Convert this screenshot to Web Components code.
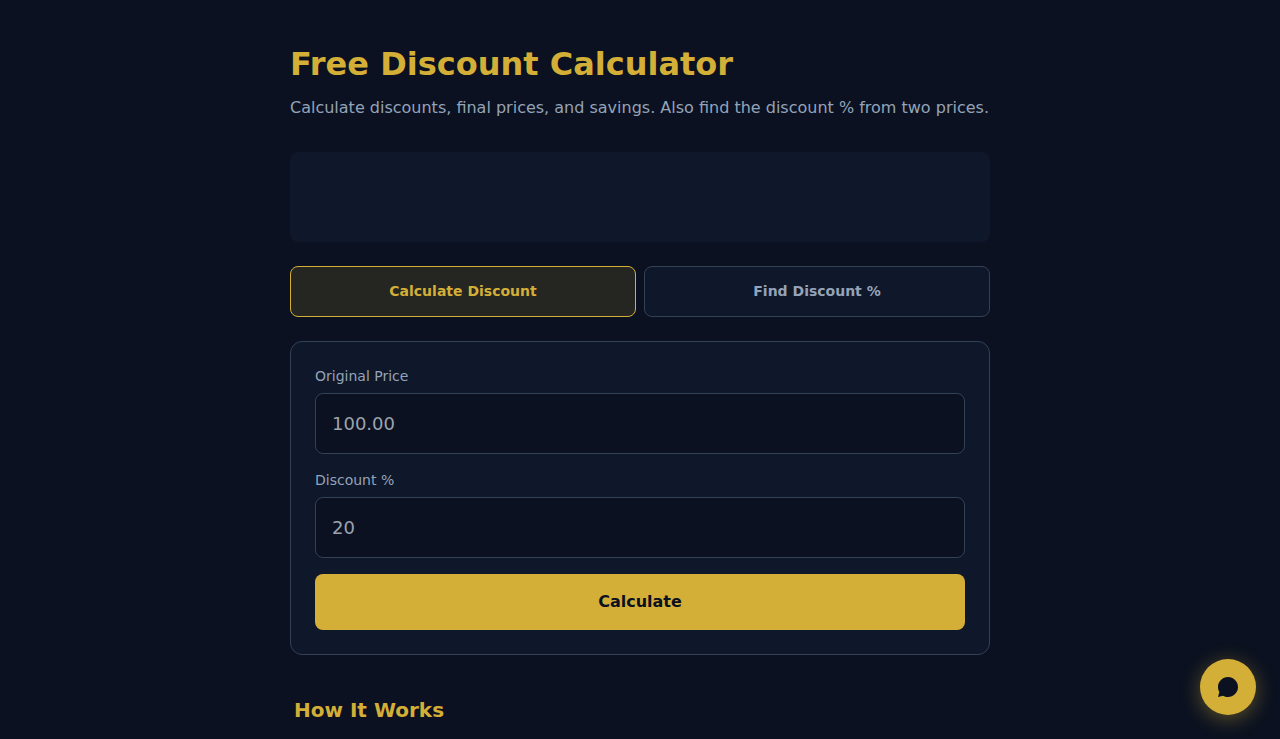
<!DOCTYPE html>
<html lang="en">
<head>
<meta charset="utf-8">
<meta name="viewport" content="width=device-width, initial-scale=1">
<title>Free Discount Calculator</title>
<style>
  :root {
    --bg: #0b1120;
    --surface: #0f172a;
    --line: #334155;
    --muted: #94a3b8;
    --gold: #d4af37;
  }
  body {
    margin: 0;
    background: var(--bg);
    color: var(--muted);
    font: 16px/24px "DejaVu Sans", sans-serif;
  }
</style>
</head>
<body>
<calc-page>
  <page-intro>
    <span slot="title">Free Discount Calculator</span>
    Calculate discounts, final prices, and savings. Also find the discount % from two prices.
  </page-intro>
  <ad-banner></ad-banner>
  <mode-tabs></mode-tabs>
  <discount-form>
    <price-field label="Original Price" placeholder="100.00"></price-field>
    <price-field label="Discount %" placeholder="20"></price-field>
  </discount-form>
  <info-section><span slot="title">How It Works</span></info-section>
</calc-page>
<chat-button></chat-button>

<script>
  const define = (name, html, setup) => {
    const template = document.createElement('template');
    template.innerHTML = html;
    customElements.define(name, class extends HTMLElement {
      constructor() {
        super();
        this.attachShadow({ mode: 'open' }).append(template.content.cloneNode(true));
      }
      connectedCallback() {
        if (setup) setup(this, this.shadowRoot);
      }
    });
  };

  define('calc-page', `
    <style>
      :host { display: block; }
      main {
        box-sizing: border-box;
        max-width: 740px;
        margin: 0 auto;
        padding: 40px 20px 0;
        display: flex;
        flex-direction: column;
        gap: 24px;
      }
    </style>
    <main><slot></slot></main>`);

  define('page-intro', `
    <style>
      :host { display: block; padding-bottom: 8px; }
      h1 { margin: 0 0 8px; font-size: 32px; line-height: 48px; color: var(--gold); }
      p { margin: 0; }
    </style>
    <h1><slot name="title"></slot></h1>
    <p><slot></slot></p>`);

  define('ad-banner', `
    <style>
      :host { display: block; min-height: 90px; border-radius: 8px; background: var(--surface); }
    </style>`);

  define('mode-tabs', `
    <style>
      :host { display: flex; gap: 8px; }
      button {
        flex: 1;
        padding: 16px;
        border: 1px solid var(--line);
        border-radius: 8px;
        background: var(--surface);
        color: var(--muted);
        font: bold 14px/17px "DejaVu Sans", sans-serif;
        cursor: pointer;
      }
      button[aria-pressed="true"] {
        border-color: var(--gold);
        background: #d4af3722;
        color: var(--gold);
      }
    </style>
    <button type="button" aria-pressed="true">Calculate Discount</button>
    <button type="button" aria-pressed="false">Find Discount %</button>`,
    (host, root) => {
      const tabs = root.querySelectorAll('button');
      tabs.forEach(tab => {
        tab.onclick = () => tabs.forEach(t => t.setAttribute('aria-pressed', String(t === tab)));
      });
    });

  define('price-field', `
    <style>
      :host { display: block; }
      label { display: block; margin-bottom: 6px; font-size: 14px; line-height: 21px; }
      input {
        display: block;
        box-sizing: border-box;
        width: 100%;
        height: 61px;
        padding: 16px;
        border: 1px solid var(--line);
        border-radius: 8px;
        background: var(--bg);
        color: #fff;
        font: 18px/27px "DejaVu Sans", sans-serif;
      }
      input::placeholder { color: #9ca3af; }
    </style>
    <label for="value"></label>
    <input id="value" type="text" inputmode="decimal">`,
    (host, root) => {
      root.querySelector('label').textContent = host.getAttribute('label');
      root.querySelector('input').placeholder = host.getAttribute('placeholder');
    });

  define('discount-form', `
    <style>
      :host { display: block; padding: 24px; border: 1px solid var(--line); border-radius: 12px; background: var(--surface); }
      form { display: flex; flex-direction: column; gap: 16px; }
      button {
        padding: 16px;
        border: 0;
        border-radius: 8px;
        background: var(--gold);
        color: var(--bg);
        font: bold 16px/24px "DejaVu Sans", sans-serif;
        cursor: pointer;
      }
    </style>
    <form>
      <slot></slot>
      <button type="button">Calculate</button>
    </form>`);

  define('info-section', `
    <style>
      :host { display: block; padding: 16px 4px 0; }
      h2 { margin: 0; font-size: 20px; line-height: 30px; color: var(--gold); }
    </style>
    <h2><slot name="title"></slot></h2>`);

  define('chat-button', `
    <style>
      :host { position: fixed; right: 24px; bottom: 24px; display: block; }
      button {
        display: flex;
        align-items: center;
        justify-content: center;
        width: 56px;
        height: 56px;
        padding: 0;
        border: 0;
        border-radius: 50%;
        background: var(--gold);
        color: var(--bg);
        box-shadow: 0 4px 20px rgba(212, 175, 55, 0.4);
        cursor: pointer;
      }
    </style>
    <button type="button" aria-label="Open chat">
      <svg width="24" height="24" viewBox="0 0 24 24" fill="currentColor" aria-hidden="true">
        <path d="M12 2C6.48 2 2 6.48 2 12c0 1.82.49 3.53 1.34 5L2 22l5-1.34c1.47.85 3.18 1.34 5 1.34 5.52 0 10-4.48 10-10S17.52 2 12 2z"/>
      </svg>
    </button>`);
</script>
</body>
</html>
